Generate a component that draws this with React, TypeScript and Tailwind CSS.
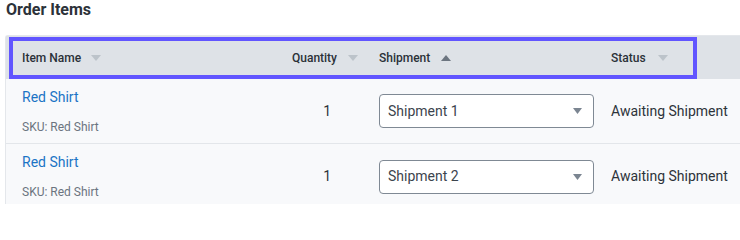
import React from "react";

const rows = [
  { name: "Red Shirt", sku: "Red Shirt", qty: 1, shipment: "Shipment 1", status: "Awaiting Shipment" },
  { name: "Red Shirt", sku: "Red Shirt", qty: 1, shipment: "Shipment 2", status: "Awaiting Shipment" },
];

function Caret({ up = false, active = false }: { up?: boolean; active?: boolean }) {
  return (
    <svg width="10" height="6" viewBox="0 0 10 6" className={active ? "fill-[#6c7580]" : "fill-[#bcc3ca]"}>
      {up ? <path d="M0 6 L5 0 L10 6 Z" /> : <path d="M0 0 L10 0 L5 6 Z" />}
    </svg>
  );
}

export default function App() {
  return (
    <div className="w-[740px] h-[204px] overflow-hidden bg-white font-['Roboto',sans-serif]">
      <h2 className="pl-[6px] pt-0 text-[16px] leading-[20px] font-bold text-[#2c3239]">Order Items</h2>
      <div className="mt-[15px] ml-[5px] w-[760px] border-l border-t border-[#e4e7eb] rounded-tl-[3px]">
        <div className="relative grid grid-cols-[264px_93px_232px_1fr] h-[43px] bg-[#dee2e7] text-[12px] font-medium text-[#2b3138]">
          <div className="flex items-center gap-[10px] pl-[16px]">
            <span>Item Name</span>
            <Caret />
          </div>
          <div className="flex items-center justify-end gap-[11px] pr-[5px]">
            <span>Quantity</span>
            <Caret />
          </div>
          <div className="flex items-center gap-[11px] pl-[16px]">
            <span>Shipment</span>
            <Caret up active />
          </div>
          <div className="flex items-center gap-[12px] pl-[16px]">
            <span>Status</span>
            <Caret />
          </div>
          <div className="pointer-events-none absolute left-[3px] top-[1px] w-[688px] h-[42px] border-4 border-[#6155ff]" />
        </div>
        {rows.map((r, i) => (
          <div
            key={i}
            className={`grid grid-cols-[264px_93px_232px_1fr] h-[65px] bg-[#f8f9fb] ${i === 0 ? "border-b border-[#e3e6ea]" : ""}`}
          >
            <div className="pl-[16px] pt-[8px]">
              <div className="text-[14px] leading-[20px] text-[#1b74c5]">{r.name}</div>
              <div className="mt-[12px] text-[12px] leading-[16px] text-[#6b7480]">SKU: {r.sku}</div>
            </div>
            <div className="flex items-center justify-end pr-[32px] text-[14px] text-[#2d333a]">{r.qty}</div>
            <div className="flex items-center pl-[16px]">
              <div className="flex items-center justify-between w-[215px] h-[34px] rounded-[4px] border border-[#7f8994] bg-white pl-[8px] pr-[11px] text-[14px] text-[#3c444d]">
                <span>{r.shipment}</span>
                <svg width="9" height="6" viewBox="0 0 9 6" className="fill-[#7b8591]">
                  <path d="M0 0 L9 0 L4.5 6 Z" />
                </svg>
              </div>
            </div>
            <div className="flex items-center pl-[16px] text-[14px] text-[#2d333a]">{r.status}</div>
          </div>
        ))}
      </div>
    </div>
  );
}
